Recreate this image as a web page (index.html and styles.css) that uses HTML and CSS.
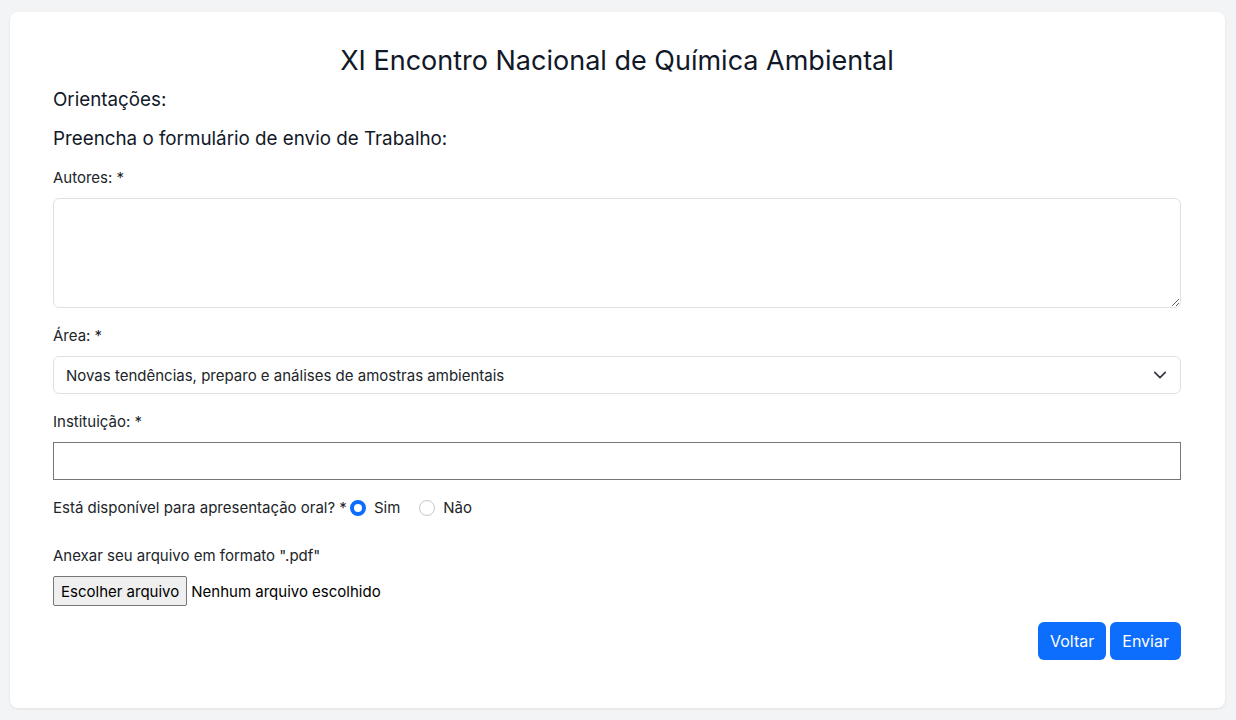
FILE: index.html
```html
<!DOCTYPE html>
<html lang="pt-BR">

<head>
    <meta charset="UTF-8">
    <meta name="viewport" content="width=device-width, initial-scale=1.0">
    <title>XI Encontro Nacional de Química Ambiental</title>
    <link rel="stylesheet" href="styles.css">
</head>

<body>

    <div class="card">
        <h1 class="title">XI Encontro Nacional de Química Ambiental</h1>
        <h3 class="subtitle">Orientações:</h3>
        <h3 class="subtitle second">Preencha o formulário de envio de Trabalho:</h3>

        <form id="envio-form">
            <div class="field">
                <label for="autores">Autores: *</label>
                <textarea id="autores" class="control area"></textarea>
            </div>
            <div class="field">
                <label for="area">Área: *</label>
                <div class="select-wrap">
                    <select id="area" class="control select">
                        <option>Novas tendências, preparo e análises de amostras ambientais</option>
                    </select>
                    <svg class="chevron" width="14" height="14" viewBox="0 0 16 16">
                        <path d="M2 5l6 6 6-6" fill="none" stroke="#343a40" stroke-width="2" stroke-linecap="round" stroke-linejoin="round"/>
                    </svg>
                </div>
            </div>
            <div class="field">
                <label for="instituicao">Instituição: *</label>
                <input type="text" id="instituicao" class="plain">
            </div>
            <div class="radio-row">
                <span>Está disponível para apresentação oral? *</span>
                <label class="radio"><input type="radio" name="oral" checked> Sim</label>
                <label class="radio"><input type="radio" name="oral"> Não</label>
            </div>
            <div class="file-field">
                <p>Anexar seu arquivo em formato ".pdf"</p>
                <div class="file-row">
                    <button type="button" class="file-btn">Escolher arquivo</button>
                    <span>Nenhum arquivo escolhido</span>
                </div>
            </div>
            <div class="actions">
                <button type="button" class="btn">Voltar</button>
                <button type="submit" class="btn">Enviar</button>
            </div>
        </form>
    </div>

</body>

</html>
```

FILE: styles.css
```css
body {
    margin: 0;
    padding: 12px 11px 12px 10px;
    background-color: #f3f4f6;
    font-family: Inter, "Noto Sans", sans-serif;
    color: #212529;
}

.card {
    background-color: white;
    border-radius: 8px;
    box-shadow: 0 1px 3px rgba(0, 0, 0, 0.08);
    padding: 32px 44px 48px 43px;
}

.title {
    margin: 0;
    text-align: center;
    font-size: 27px;
    font-weight: 400;
    line-height: 34px;
    color: #111827;
}

.subtitle {
    margin: 10px 0 0 0;
    font-size: 18.8px;
    font-weight: 400;
    line-height: 23px;
    color: #111827;
}

.subtitle.second {
    margin-top: 16px;
}

#envio-form {
    margin-top: 17px;
    font-size: 15px;
}

.field {
    margin-bottom: 17px;
}

.field label {
    display: block;
    line-height: 22px;
    margin-bottom: 9px;
}

.control {
    display: block;
    width: 100%;
    box-sizing: border-box;
    border: 1px solid #dee2e6;
    border-radius: 6px;
    font-family: inherit;
    font-size: 15px;
    color: #212529;
    background-color: white;
}

.area {
    height: 110px;
    resize: vertical;
}

.select-wrap {
    position: relative;
}

.select {
    height: 38px;
    padding: 0 36px 0 12px;
    appearance: none;
}

.chevron {
    position: absolute;
    right: 14px;
    top: 12px;
}

.plain {
    display: block;
    width: 100%;
    box-sizing: border-box;
    height: 38px;
    border: 1px solid #767676;
    border-radius: 0;
    font-family: inherit;
    font-size: 15px;
}

.radio-row {
    display: flex;
    align-items: center;
    line-height: 22px;
}

.radio {
    display: flex;
    align-items: center;
    gap: 8px;
    margin-left: 3px;
    margin-right: 16px;
}

.radio input {
    appearance: none;
    width: 16px;
    height: 16px;
    margin: 0;
    border: 1px solid #c4c8cc;
    border-radius: 50%;
    background-color: white;
}

.radio input:checked {
    border: 4px solid #0d6efd;
    background-color: white;
}

.file-field {
    margin-top: 26px;
}

.file-field p {
    margin: 0 0 9px 0;
    line-height: 22px;
}

.file-row {
    display: flex;
    align-items: center;
    gap: 4px;
    color: #000;
}

.file-btn {
    height: 30px;
    padding: 0 7px;
    background-color: #efefef;
    border: 1px solid #767676;
    border-radius: 2px;
    font-family: inherit;
    font-size: 15px;
    color: #000;
}

.actions {
    display: flex;
    justify-content: flex-end;
    gap: 4px;
    margin-top: 16px;
}

.btn {
    height: 38px;
    padding: 0 12px;
    background-color: #0d6efd;
    color: white;
    border: none;
    border-radius: 6px;
    font-family: inherit;
    font-size: 16px;
    cursor: pointer;
}
```
